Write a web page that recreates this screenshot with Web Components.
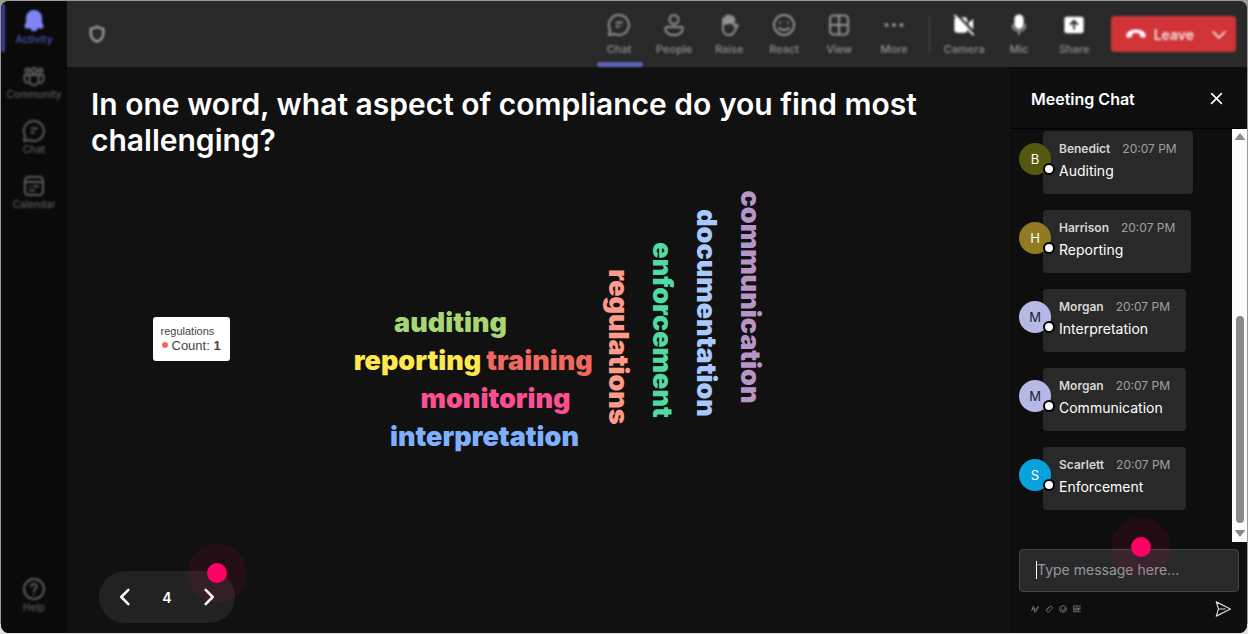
<!DOCTYPE html>
<html lang="en">
<head>
<meta charset="utf-8">
<meta name="viewport" content="width=device-width, initial-scale=1">
<title>Meeting</title>
<style>
  html, body { margin: 0; height: 100%; }
  body { background: #9a9c9a; font-family: Inter, "Liberation Sans", sans-serif; color: #fff; }
</style>
</head>
<body>
<meet-app></meet-app>

<script>
const ICONS = {
  bell: '<path fill="currentColor" d="M12 2a7 7 0 0 0-7 7v4l-1.500 4.200c-.2.700.2 1.300.9 1.300h15.200c.7 0 1.100-.6.900-1.300L19 13V9a7 7 0 0 0-7-7zM9.500 19.500a2.600 2.600 0 0 0 5 0z"/>',
  community: '<circle cx="12" cy="6.500" r="2.600"/><circle cx="5.500" cy="6.500" r="2"/><circle cx="18.500" cy="6.500" r="2"/><path d="M7.500 11h9v5.500a4.500 4.500 0 0 1-9 0zM7 11H2.500v4.500a3.500 3.500 0 0 0 5 3.200M17 11h4.500v4.500a3.500 3.500 0 0 1-5 3.200"/>',
  chat: '<path d="M12 2a10 10 0 1 1-4.700 18.900L2 22l1.200-5A10 10 0 0 1 12 2zM9.500 9.500h5.500M9.500 13.500h2.500"/>',
  calendar: '<rect x="3" y="3" width="18" height="18" rx="3.500"/><path d="M3 8h18M8 12.500h.1M12 12.500h4.100M8 16.500h4.100"/>',
  help: '<circle cx="12" cy="12" r="10"/><path d="M9.300 9.500a2.700 2.700 0 1 1 4.300 2.200c-1 .8-1.600 1.200-1.600 2.300M12 17v.2"/>',
  shield: '<path d="M12 3c2.300 1.700 4.600 2.500 7.500 2.700V11c0 5-2.800 8.300-7.500 10.200C7.300 19.300 4.500 16 4.500 11V5.700C7.400 5.500 9.700 4.700 12 3z"/>',
  people: '<circle cx="12" cy="6.500" r="4.500"/><path d="M5 14h14c1 0 1.700.8 1.700 1.800 0 3.800-4 6.200-8.700 6.200s-8.700-2.400-8.700-6.200c0-1 .7-1.800 1.700-1.800z"/>',
  raise: '<path fill="currentColor" stroke="none" d="M5.500 12V5.500a1.500 1.500 0 0 1 2.700-.8V3a1.500 1.500 0 0 1 2.900-.5 1.500 1.500 0 0 1 2.900.6 1.500 1.500 0 0 1 2.700.9V11h-3z"/><path d="M6 6v9.500c0 4 2.600 6.500 6 6.500 3 0 4.500-1.700 5.800-4.300l3-5.200c-1.200-1.300-2.500-.8-3.800 1V5"/>',
  react: '<circle cx="12" cy="12" r="10"/><path d="M8 9.500v.5M16 9.500v.5M7 15c2.400 2.500 7.600 2.500 10 0"/>',
  view: '<rect x="3" y="2.500" width="18" height="19" rx="3.500"/><path d="M12 3v18M3 12h18"/>',
  more: '<g fill="currentColor" stroke="none"><circle cx="4.500" cy="12" r="2"/><circle cx="12" cy="12" r="2"/><circle cx="19.500" cy="12" r="2"/></g>',
  camera: '<path fill="currentColor" stroke="none" d="M4.500 3.500h8a3 3 0 0 1 3 3v11a3 3 0 0 1-3 3h-8a3 3 0 0 1-3-3v-11a3 3 0 0 1 3-3zM17 9.500l5-4v14l-5-4z"/><path stroke="#292929" stroke-width="2.500" d="M5 1l18 19"/><path d="M2 1.500l20 21"/>',
  mic: '<rect x="8" y="1.500" width="8" height="14" rx="4" fill="currentColor"/><path stroke="#999" d="M5 12c0 4 3 6.500 7 6.500s7-2.500 7-6.500M12 18.500V22"/>',
  share: '<path fill="currentColor" stroke="none" fill-rule="evenodd" d="M4 3h16a2.500 2.500 0 0 1 2.500 2.500v13A2.500 2.500 0 0 1 20 21H4a2.500 2.500 0 0 1-2.500-2.500v-13A2.500 2.500 0 0 1 4 3zM12 6l-5 5 1.500 1.500L11 10v7h2v-7l2.500 2.500L17 11z"/>',
  phone: '<path fill="currentColor" stroke="none" d="M12 7c5.500 0 10 2.300 10.500 6 .2 1.500-.2 2.800-1.300 3l-3.700-.6c-.9-.2-1.300-.8-1.300-1.700v-2a14 14 0 0 0-8.400 0v2c0 .9-.4 1.500-1.300 1.700l-3.700.6c-1.100-.2-1.500-1.500-1.300-3C2 9.300 6.500 7 12 7z"/>',
  down: '<path d="M2 8.500l10 10 10-10"/>',
  left: '<path d="M16 3.500L7.500 12l8.500 8.500"/>',
  right: '<path d="M8 3.500l8.500 8.500L8 20.500"/>',
  close: '<path d="M3 3l18 18M21 3L3 21"/>',
  send: '<path d="M3 2.500L22 12 3 21.500 6 12zM6 12h9"/>',
  format: '<path d="M2 17L7 4l4 11M4 12h6M20 6L11 17l-1 4 4-1 8-11z"/>',
  attach: '<path d="M7 13l7-8c2-2 5-1.500 6.500 0s1.500 4 0 6l-7 8c-2 2-5 3-8 1s-2-5 0-7l6-6"/>',
  gif: '<path d="M22 3H2v17h20M10 9H6v6h4v-3M14 9v6M22 9h-5v6M17 12h4"/>'
};
const icon = (name, size, weight = 2) =>
  `<svg width="${size}" height="${size}" viewBox="0 0 24 24" fill="none" stroke="currentColor" stroke-width="${weight}" stroke-linecap="round" stroke-linejoin="round" aria-hidden="true">${ICONS[name]}</svg>`;

const RESET = `
  *, *::before { box-sizing: border-box; }
  button { font: inherit; color: inherit; background: none; border: 0; padding: 0; margin: 0; cursor: pointer; }
  svg { display: block; flex: none; }
`;

const define = (name, render) => customElements.define(name, class extends HTMLElement {
  connectedCallback() {
    if (this.shadowRoot) return;
    this.attachShadow({ mode: "open" }).innerHTML = render(this);
  }
});

define("meet-app", () => `
  <style>${RESET}
    :host { display: block; height: 100vh; min-height: 480px; padding: 1px; box-sizing: border-box; background: linear-gradient(to top, #e4e4e4 10px, transparent 10px); }
    .frame { display: grid; grid-template-columns: 66px 1fr; height: 100%; background: #111; border-radius: 8px; overflow: hidden; }
    .main { display: grid; grid-template-rows: 66px 1fr; min-width: 0; min-height: 0; }
    .body { display: grid; grid-template-columns: 1fr 237px; min-height: 0; }
  </style>
  <div class="frame">
    <side-rail></side-rail>
    <div class="main">
      <top-bar></top-bar>
      <div class="body">
        <poll-stage></poll-stage>
        <chat-panel></chat-panel>
      </div>
    </div>
  </div>`);

define("side-rail", () => `
  <style>${RESET}
    :host { display: block; background: #0a0a0a; }
    nav { display: flex; flex-direction: column; height: 100%; padding-bottom: 9px; box-sizing: border-box; filter: blur(1.3px); }
    .last { margin-top: auto; }
  </style>
  <nav aria-label="Apps">
    <rail-item icon="bell" active>Activity</rail-item>
    <rail-item icon="community">Community</rail-item>
    <rail-item icon="chat">Chat</rail-item>
    <rail-item icon="calendar">Calendar</rail-item>
    <rail-item icon="help" class="last">Help</rail-item>
  </nav>`);

define("rail-item", el => `
  <style>${RESET}
    :host { display: block; height: 55px; color: #5c5c5c; font-weight: 500; }
    :host([active]) { color: #4b4fa8; font-weight: 600; }
    button { display: flex; flex-direction: column; align-items: center; width: 100%; height: 100%; padding-top: 8px; font-size: 10px; line-height: 12px; position: relative; }
    :host([active]) svg { color: #7f85f5; }
    :host([active]) button::before { content: ""; position: absolute; left: 0; top: 3px; width: 4px; height: 48px; background: #3f4299; }
  </style>
  <button type="button">${icon(el.getAttribute("icon"), 24)}<span><slot></slot></span></button>`);

define("top-bar", () => `
  <style>${RESET}
    :host { display: block; background: #292929; }
    header { display: flex; align-items: center; height: 100%; padding: 0 11px 0 20px; filter: blur(1.3px); }
    .shield { color: #999; margin-right: auto; }
    .rule { width: 1px; height: 36px; background: #505050; margin: 0 7px; }
    .leave { display: flex; align-items: center; height: 36px; margin-left: 9px; background: #d13438; border-radius: 4px; color: #f4e4e4; font-size: 14px; font-weight: 600; }
    .leave button { height: 100%; display: flex; align-items: center; }
    .hang { padding-left: 14px; gap: 7px; }
    .hang svg { color: #fff; }
    .menu { padding: 0 10px 0 18px; }
  </style>
  <header>
    <button type="button" class="shield" aria-label="Privacy">${icon("shield", 20, 3)}</button>
    <tool-button icon="chat" active>Chat</tool-button>
    <tool-button icon="people">People</tool-button>
    <tool-button icon="raise">Raise</tool-button>
    <tool-button icon="react">React</tool-button>
    <tool-button icon="view">View</tool-button>
    <tool-button icon="more">More</tool-button>
    <span class="rule"></span>
    <tool-button icon="camera" solid>Camera</tool-button>
    <tool-button icon="mic" solid>Mic</tool-button>
    <tool-button icon="share" solid>Share</tool-button>
    <div class="leave">
      <button type="button" class="hang">${icon("phone", 22)}Leave</button>
      <button type="button" class="menu" aria-label="Leave options">${icon("down", 14, 3)}</button>
    </div>
  </header>`);

define("tool-button", el => `
  <style>${RESET}
    :host { display: block; width: 55px; height: 66px; color: #929292; }
    button { display: flex; flex-direction: column; align-items: center; gap: 5px; width: 100%; height: 100%; padding-top: 12px; font-size: 11px; line-height: 14px; font-weight: 500; position: relative; }
    .glyph { display: grid; place-items: center; height: 24px; }
    :host([solid]) svg { color: #fff; }
    :host([active]) button::before { content: ""; position: absolute; left: 5px; right: 4px; bottom: 0; height: 5px; border-radius: 2px; background: #6063b4; }
  </style>
  <button type="button"><span class="glyph">${icon(el.getAttribute("icon"), el.hasAttribute("solid") ? 22 : 24)}</span><span><slot></slot></span></button>`);

define("poll-stage", () => `
  <style>${RESET}
    :host { display: flex; flex-direction: column; min-width: 0; min-height: 0; }
    h1 { margin: 19px 24px 0; font-size: 30px; line-height: 36px; font-weight: 600; }
    word-cloud { flex: 1; }
    slide-pager { align-self: flex-start; margin: 0 0 10px 32px; }
  </style>
  <h1>In one word, what aspect of compliance do you find most challenging?</h1>
  <word-cloud></word-cloud>
  <slide-pager></slide-pager>`);

/* The cloud is a free canvas: --x and --y place each word from its centre. */
define("word-cloud", () => `
  <style>${RESET}
    :host { display: block; position: relative; min-height: 0; }
    count-tip { position: absolute; left: calc(50% - 386px); top: calc(50% - 48px); }
  </style>
  <cloud-word style="--x:-88px;--y:-42px;color:#a8d672">auditing</cloud-word>
  <cloud-word style="--x:-121px;--y:-4px;color:#ffe74f">reporting</cloud-word>
  <cloud-word style="--x:1px;--y:-4px;color:#f2685f">training</cloud-word>
  <cloud-word style="--x:-43px;--y:34px;color:#ff4f93">monitoring</cloud-word>
  <cloud-word style="--x:-54px;--y:72px;color:#7fb0ff">interpretation</cloud-word>
  <cloud-word upright style="--x:79px;--y:-18px;color:#ff9b88">regulations</cloud-word>
  <cloud-word upright style="--x:123px;--y:-35px;color:#52d9a4">enforcement</cloud-word>
  <cloud-word upright style="--x:167px;--y:-52px;color:#a9c8fb">documentation</cloud-word>
  <cloud-word upright style="--x:211px;--y:-68px;color:#b795c7">communication</cloud-word>
  <count-tip></count-tip>`);

define("cloud-word", () => `
  <style>
    :host { position: absolute; left: calc(50% + var(--x)); top: calc(50% + var(--y)); transform: translate(-50%, -50%); font-size: 27px; line-height: 32px; font-weight: 900; white-space: nowrap; }
    :host([upright]) { writing-mode: vertical-rl; }
  </style><slot></slot>`);

define("count-tip", () => `
  <style>${RESET}
    :host { display: block; background: #fff; color: #444; border-radius: 3px; padding: 7px 8px 8px; font-family: "Liberation Sans", Arial, sans-serif; width: 77px; box-sizing: border-box; white-space: nowrap; }
    .name { font-size: 11px; line-height: 14px; }
    .row { display: flex; align-items: center; font-size: 13px; line-height: 15px; gap: 4px; }
    i { width: 6px; height: 6px; margin-left: 1px; border-radius: 50%; background: #f2685f; }
  </style>
  <div class="name">regulations</div>
  <div class="row"><i></i><span>Count: <b>1</b></span></div>`);

define("slide-pager", () => `
  <style>${RESET}
    :host { display: flex; align-items: center; justify-content: space-between; width: 136px; height: 52px; padding: 0 16px; box-sizing: border-box; border-radius: 26px; background: #222; position: relative; font-size: 14px; font-weight: 600; }
    touch-spot { position: absolute; left: 118px; top: 2px; }
  </style>
  <button type="button" aria-label="Previous question">${icon("left", 20, 3)}</button>
  <span>4</span>
  <button type="button" aria-label="Next question">${icon("right", 20, 3)}</button>
  <touch-spot></touch-spot>`);

define("touch-spot", () => `
  <style>
    :host { display: block; width: 20px; height: 20px; border-radius: 50%; background: #ff0066; box-shadow: 0 0 0 19px rgba(255, 0, 80, .08); transform: translate(-50%, -50%); pointer-events: none; }
  </style>`);

define("chat-panel", () => `
  <style>${RESET}
    :host { display: flex; flex-direction: column; min-height: 0; background: #0e0e0e; }
    header { display: flex; align-items: center; justify-content: space-between; height: 62px; padding: 2px 24px 0 21px; border-bottom: 1px solid #000; }
    h2 { margin: 0; font-size: 16px; line-height: 20px; font-weight: 600; }
    .log { flex: 1; display: flex; min-height: 0; }
    .list { flex: 1; display: flex; flex-direction: column; gap: 16px; padding: 2px 0 0 9px; overflow: hidden; }
  </style>
  <header><h2>Meeting Chat</h2><button type="button" aria-label="Close chat">${icon("close", 13, 3)}</button></header>
  <div class="log">
    <div class="list">
      <chat-message initial="B" name="Benedict" style="--tint:#55580f">Auditing</chat-message>
      <chat-message initial="H" name="Harrison" style="--tint:#917a21">Reporting</chat-message>
      <chat-message initial="M" name="Morgan" style="--tint:#b6b8e6;--ink:#1c1c30">Interpretation</chat-message>
      <chat-message initial="M" name="Morgan" style="--tint:#b6b8e6;--ink:#1c1c30">Communication</chat-message>
      <chat-message initial="S" name="Scarlett" style="--tint:#0aa2dc">Enforcement</chat-message>
    </div>
    <scroll-track></scroll-track>
  </div>
  <chat-composer></chat-composer>`);

define("chat-message", el => `
  <style>${RESET}
    :host { display: flex; flex: none; align-items: flex-start; }
    .avatar { position: relative; display: grid; place-items: center; width: 32px; height: 32px; margin: 12px -8px 0 0; border-radius: 50%; background: var(--tint); color: var(--ink, #fff); font-size: 13px; z-index: 1; }
    .avatar::before { content: ""; position: absolute; left: 24px; top: 20px; width: 12px; height: 12px; border-radius: 50%; background: #fff; border: 2px solid #000; }
    .card { height: 63px; padding: 10px 16px; border-radius: 4px; background: #292929; white-space: nowrap; }
    .meta { display: flex; gap: 12px; font-size: 12px; line-height: 16px; color: #a0a0a0; }
    .meta b { font-weight: 600; color: #d6d6d6; }
    .text { margin-top: 4px; font-size: 14px; line-height: 20px; }
  </style>
  <span class="avatar">${el.getAttribute("initial")}</span>
  <div class="card">
    <div class="meta"><b>${el.getAttribute("name")}</b><time>20:07 PM</time></div>
    <div class="text"><slot></slot></div>
  </div>`);

define("scroll-track", () => `
  <style>${RESET}
    :host { display: flex; flex-direction: column; align-items: center; width: 15px; background: #fcfcfc; padding: 4px 0 5px; box-sizing: border-box; color: #8a8a8a; }
    .thumb { flex: 1; width: 8px; display: flex; flex-direction: column; justify-content: flex-end; }
    .thumb::before { content: ""; height: 54%; border-radius: 4px; background: #8a8a8a; }
    .down { margin-top: 7px; }
  </style>
  <svg width="10" height="7" viewBox="0 0 10 7"><path fill="currentColor" d="M5 0l5 6.500q0 .5-.5.5h-9q-.5 0-.5-.5z"/></svg>
  <div class="thumb"></div>
  <svg class="down" width="10" height="7" viewBox="0 0 10 7"><path fill="currentColor" d="M5 7L0 .5Q0 0 .5 0h9q.5 0 .5.500z"/></svg>`);

define("chat-composer", () => `
  <style>${RESET}
    :host { display: block; position: relative; padding: 7px 8px 15px 9px; }
    .field { display: flex; align-items: center; height: 43px; padding: 0 16px 2px; border: 1px solid #444; border-radius: 4px; background: #292929; }
    .caret { width: 1px; height: 18px; background: #fff; }
    input { flex: 1; min-width: 0; border: 0; padding: 0; outline: 0; background: none; color: #fff; font: 14px/20px Inter, sans-serif; }
    input::placeholder { color: #9499a0; opacity: 1; }
    .tools { display: flex; align-items: center; gap: 6px; height: 18px; margin: 8px 7px 0 12px; color: #999; }
    .send { margin-left: auto; color: #ddd; }
    touch-spot { position: absolute; left: 131px; top: 5px; }
  </style>
  <div class="field"><span class="caret"></span><input type="text" placeholder="Type message here..." aria-label="Message"></div>
  <div class="tools">
    <button type="button" aria-label="Format">${icon("format", 8)}</button>
    <button type="button" aria-label="Attach">${icon("attach", 8)}</button>
    <button type="button" aria-label="Emoji">${icon("react", 8)}</button>
    <button type="button" aria-label="GIF">${icon("gif", 8)}</button>
    <button type="button" class="send" aria-label="Send">${icon("send", 18, 1.500)}</button>
  </div>
  <touch-spot></touch-spot>`);
</script>
</body>
</html>
